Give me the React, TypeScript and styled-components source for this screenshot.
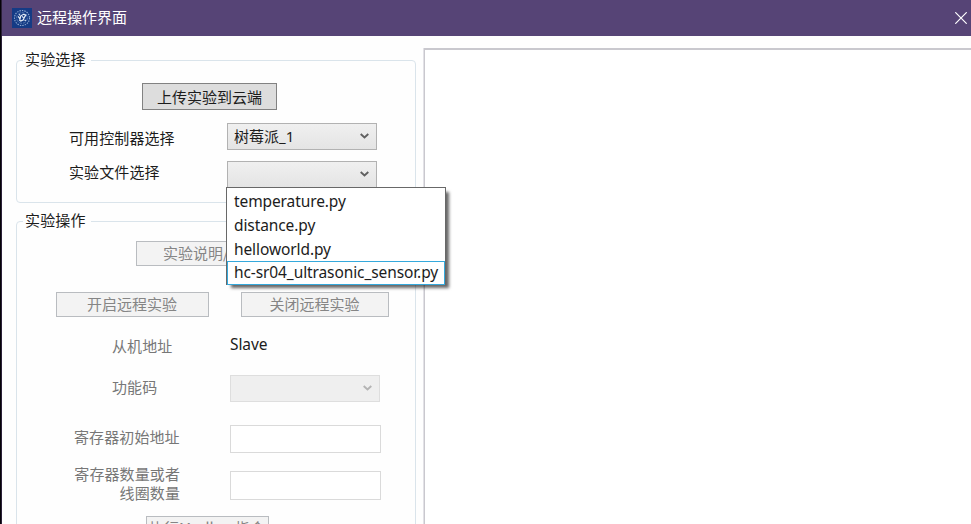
import React from "react";
import styled, { createGlobalStyle } from "styled-components";

const Global = createGlobalStyle`
  * { box-sizing: border-box; }
  body {
    margin: 0;
    overflow: hidden;
    background: #fff;
    font: 15px/20px "Noto Sans CJK SC", sans-serif;
    color: #1c1c1c;
  }
`;

const Window = styled.div`
  height: 524px;
  overflow: hidden;
  display: flex;
  flex-direction: column;
  background: #fefefe;
  border-left: 1px solid #050308;
  box-shadow: inset 1px 0 #2a2038;
`;

const TitleBar = styled.header`
  flex: 0 0 36px;
  margin-left: 1px;
  padding: 0 4px 1px 10px;
  display: flex;
  align-items: center;
  background: #564476;
  color: #fff;
`;

const Title = styled.span`
  flex: 1;
  margin-left: 5px;
  padding-bottom: 2px;
`;

const Body = styled.main`
  flex: 1;
  min-height: 0;
  display: grid;
  grid-template-columns: 400px 1fr;
  column-gap: 8px;
  padding: 12px 0 0 15px;
`;

const Groups = styled.div`
  display: flex;
  flex-direction: column;
  gap: 18px;
  padding-top: 12px;
`;

const Group = styled.section<{ $height: number }>`
  flex: 0 0 ${(p) => p.$height}px;
  display: flex;
  flex-direction: column;
  border: 1px solid #dae4eb;
  border-radius: 4px;
`;

const Legend = styled.h2`
  align-self: flex-start;
  height: 20px;
  margin: -12px 0 0 6px;
  padding: 0 5px 0 2px;
  font: inherit;
  letter-spacing: 0.15px;
  background: #fefefe;
`;

const Row = styled.div<{ $top: number; $indent?: number }>`
  display: flex;
  align-items: flex-start;
  margin-top: ${(p) => p.$top}px;
  padding-left: ${(p) => p.$indent ?? 0}px;
`;

const Button = styled.button<{ $width: number; $height?: number; $gap?: number }>`
  flex: none;
  width: ${(p) => p.$width}px;
  height: ${(p) => p.$height ?? 25}px;
  margin: 0 0 0 ${(p) => p.$gap ?? 0}px;
  padding: 0;
  font: inherit;
  line-height: 20px;
  white-space: nowrap;
  color: #1c1c1c;
  background: #ddd;
  border: 1px solid #828282;
  &:disabled {
    padding: 0 1px 2px 0;
    color: #858585;
    background: #f3f3f3;
    border-color: #b9bcc0;
  }
`;

const Label = styled.label<{ $width: number; $top?: number; $muted?: boolean }>`
  flex: none;
  width: ${(p) => p.$width}px;
  margin-top: ${(p) => p.$top ?? 0}px;
  line-height: 19px;
  letter-spacing: 0.1px;
  color: ${(p) => (p.$muted ? "#777" : "#1c1c1c")};
`;

const TwoLineText = styled.span`
  display: block;
  width: 106px;
  margin: -1px 0 1px;
  text-align: right;
`;

const SelectBox = styled.div<{ $disabled?: boolean }>`
  position: relative;
  width: 150px;
  height: 27px;
  padding: 0 7px 2px 6px;
  display: flex;
  align-items: center;
  justify-content: space-between;
  border: 1px solid ${(p) => (p.$disabled ? "#dedede" : "#b2b2b2")};
  background: ${(p) => (p.$disabled ? "#efefef" : "linear-gradient(#f0f0f0, #e4e4e4)")};
  color: ${(p) => (p.$disabled ? "#b4b4b4" : "#606060")};
`;

const Value = styled.span`
  font-family: "Noto Sans", "Noto Sans CJK SC", sans-serif;
  color: #1c1c1c;
`;

const Input = styled.input<{ $height?: number }>`
  width: 151px;
  height: ${(p) => p.$height ?? 28}px;
  border: 1px solid #dadada;
  background: #fff;
  outline: none;
`;

const Menu = styled.ul`
  position: absolute;
  z-index: 2;
  left: -2px;
  top: 25px;
  width: 220px;
  height: 98px;
  margin: 0;
  padding: 1px 0 0;
  list-style: none;
  background: #fff;
  border: 1px solid #686868;
  box-shadow: 4px 4px 3px -1px rgba(0, 0, 0, 0.6);
`;

const Option = styled.li<{ $active?: boolean }>`
  height: 24px;
  padding-left: 6px;
  font: 15.5px "Noto Sans", sans-serif;
  line-height: ${(p) => (p.$active ? 20 : 22)}px;
  letter-spacing: -0.1px;
  color: #1c1c1c;
  white-space: nowrap;
  border: 1px solid ${(p) => (p.$active ? "#35a9dc" : "transparent")};
`;

const Slave = styled.span`
  margin-top: -1px;
  font: 15.5px/20px "Noto Sans", sans-serif;
  letter-spacing: -0.1px;
`;

const Output = styled.section`
  border: solid #c9c8ce;
  border-width: 2px 0 0 1px;
  background: #fff;
  box-shadow: -1px 0 #e2e1e6;
`;

const Chevron = () => (
  <svg width="9" height="6" viewBox="0 0 9 6" fill="none" stroke="currentColor" strokeWidth="1.9">
    <path d="M.7 1 4.5 4.4 8.3 1" />
  </svg>
);

const Emblem = () => (
  <svg width="20" height="20" viewBox="0 0 20 20" fill="none">
    <path fill="#153b85" d="M0 0h20v20H0z" />
    <circle cx="10" cy="10" r="7.5" stroke="#8fabd2" strokeWidth="1.1" strokeDasharray="1.4 1.1" />
    <circle cx="10" cy="10" r="5.3" stroke="#6f90c0" strokeWidth=".7" strokeDasharray="3 1" />
    <path
      d="M6.2 8.4 8 10.8l.8-3 2.8-1.5 2.2.8-1.6 2.5-.8 2.2-2.6 1.3-1.6-1.4M10 8.4l1.4 1.2M7 6.4l1 .8M12.7 12l1 .9"
      stroke="#e8eff8"
      strokeWidth="1.2"
    />
  </svg>
);

const CloseIcon = () => (
  <svg width="12" height="12" viewBox="0 0 12 12" stroke="#fff" strokeWidth="1.2">
    <path d="M.3.3 11.7 11.7M11.7.3.3 11.7" />
  </svg>
);

const files = ["temperature.py", "distance.py", "helloworld.py", "hc-sr04_ultrasonic_sensor.py"];

export default function App() {
  return (
    <Window>
      <Global />
      <TitleBar>
        <Emblem />
        <Title>远程操作界面</Title>
        <CloseIcon />
      </TitleBar>
      <Body>
        <Groups>
          <Group $height={143}>
            <Legend>实验选择</Legend>
            <Row $top={14} $indent={125}>
              <Button $width={135} $height={27}>上传实验到云端</Button>
            </Row>
            <Row $top={13} $indent={52}>
              <Label $width={158} $top={5}>可用控制器选择</Label>
              <SelectBox>
                <Value>树莓派_1</Value>
                <Chevron />
              </SelectBox>
            </Row>
            <Row $top={11} $indent={52}>
              <Label $width={158} $top={1}>实验文件选择</Label>
              <SelectBox>
                <Value />
                <Chevron />
                <Menu>
                  {files.map((name, i) => (
                    <Option key={name} $active={i === 3}>{name}</Option>
                  ))}
                </Menu>
              </SelectBox>
            </Row>
          </Group>
          <Group $height={340}>
            <Legend>实验操作</Legend>
            <Row $top={11} $indent={119}>
              <Button $width={151} disabled>实验说明/指导</Button>
            </Row>
            <Row $top={26} $indent={39}>
              <Button $width={153} disabled>开启远程实验</Button>
              <Button $width={148} $gap={32} disabled>关闭远程实验</Button>
            </Row>
            <Row $top={18} $indent={95}>
              <Label $width={118} $top={1} $muted>从机地址</Label>
              <Slave>Slave</Slave>
            </Row>
            <Row $top={20} $indent={95}>
              <Label $width={118} $top={2} $muted>功能码</Label>
              <SelectBox $disabled>
                <Value />
                <Chevron />
              </SelectBox>
            </Row>
            <Row $top={23} $indent={57}>
              <Label $width={156} $top={2} $muted>寄存器初始地址</Label>
              <Input disabled />
            </Row>
            <Row $top={12} $indent={57}>
              <Label $width={156} $muted>
                <TwoLineText>寄存器数量或者<br />线圈数量</TwoLineText>
              </Label>
              <Row $top={6}>
                <Input $height={29} disabled />
              </Row>
            </Row>
            <Row $top={13} $indent={129}>
              <Button $width={123} disabled>执行Modbus指令</Button>
            </Row>
          </Group>
        </Groups>
        <Output />
      </Body>
    </Window>
  );
}
